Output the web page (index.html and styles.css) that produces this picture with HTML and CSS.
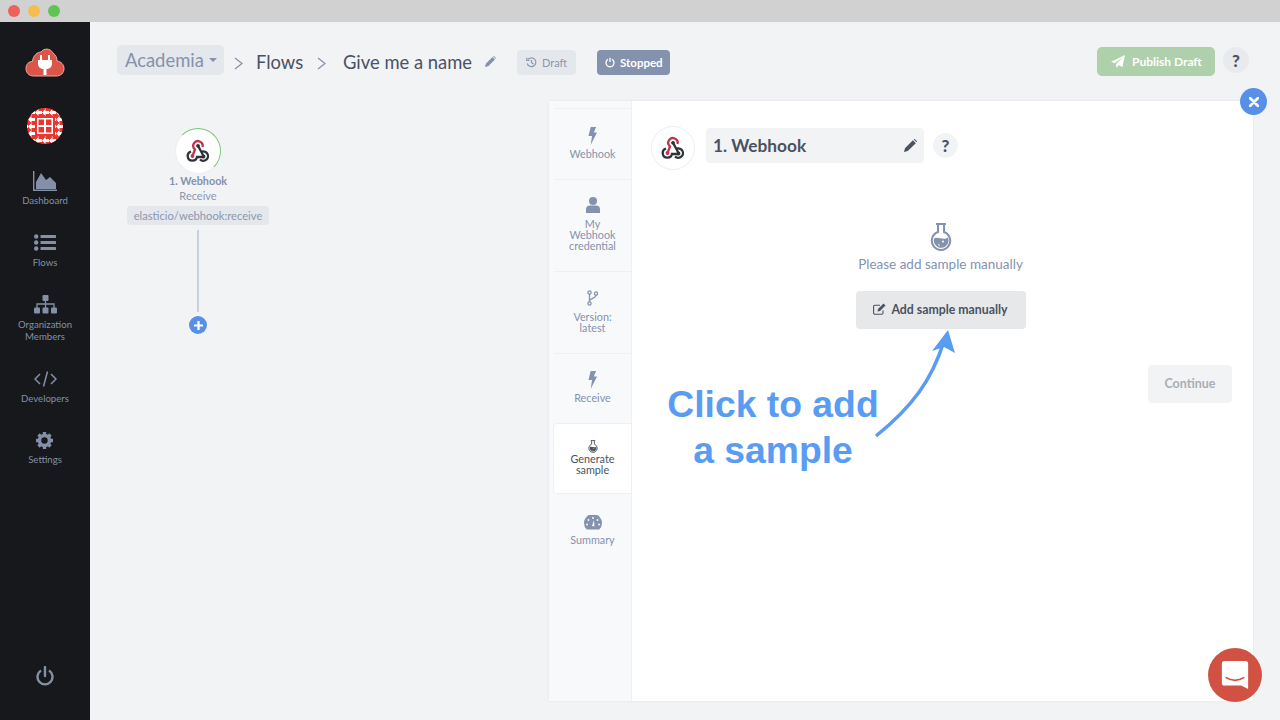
FILE: index.html
```html
<!DOCTYPE html>
<html lang="en">
<head>
    <meta charset="UTF-8">
    <title>Flows</title>
    <link rel="stylesheet" href="styles.css">
</head>
<body>
    <svg class="defs" width="0" height="0">
        <symbol id="webhook" viewBox="0 0 24 24">
            <path d="M6.500 17 L9 10.500 A4.700 4.700 0 1 1 16.500 8" fill="none" stroke="#c2334f" stroke-width="2.300"/>
            <circle cx="6.500" cy="17" r="1.900" fill="#c2334f"/>
            <path d="M12 6.800 L17.500 17" fill="none" stroke="#2f3238" stroke-width="2.300"/>
            <path d="M5 12.500 A4.700 4.700 0 1 0 11 18 H17.500" fill="none" stroke="#2f3238" stroke-width="2.300"/>
            <path d="M15 13 A4.700 4.700 0 1 1 14 20.500" fill="none" stroke="#2f3238" stroke-width="2.300"/>
            <circle cx="12" cy="6.800" r="1.900" fill="#2f3238"/>
            <circle cx="17.500" cy="17.500" r="1.900" fill="#2f3238"/>
        </symbol>
        <symbol id="bolt" viewBox="0 0 12 20">
            <path d="M4 0 L10 0 L7.500 6 L11 6 L4 20 L5.500 10 L1.500 10 Z" fill="currentColor"/>
        </symbol>
        <symbol id="flask" viewBox="0 0 22 28">
            <path d="M6 1 H16 M8 1 V9 A9.200 9.200 0 1 0 14 9 V1" fill="none" stroke="currentColor" stroke-width="2"/>
            <path d="M4 15.500 C8 13 13 18 18 14.500 A7.400 7.400 0 1 1 4 15.500 Z" fill="currentColor"/>
            <circle cx="13" cy="18.500" r="1" fill="#fff"/>
            <circle cx="9" cy="22" r=".8" fill="#fff"/>
        </symbol>
    </svg>

    <div class="titlebar">
        <span class="light light-red"></span>
        <span class="light light-yellow"></span>
        <span class="light light-green"></span>
    </div>

    <div class="app">
        <nav class="sidebar">
            <svg class="logo" width="40" height="30" viewBox="0 0 40 30">
                <path d="M9 29 C3 29 1 25 1 21.500 C1 17 4 14.500 7.500 14.500 C8 8 13 5 16 5 C19 1 25 1 28 6 C31 8 32 11 32 14 C36 14.500 39 17.500 39 21.500 C39 26 36 29 31 29 Z" fill="#db5549" stroke="#f2a79f" stroke-width="1"/>
                <path d="M16 8 V13 M24 8 V13" stroke="#fff" stroke-width="2" fill="none"/>
                <path d="M13 13 H27 V17 C27 20 24 22 21.500 22 V28 H18.500 V22 C16 22 13 20 13 17 Z" fill="#fff"/>
            </svg>
            <svg class="avatar" width="36" height="36" viewBox="0 0 36 36">
                <defs>
                    <pattern id="tiles" width="7" height="7" patternUnits="userSpaceOnUse" patternTransform="translate(1 1)">
                        <path d="M0 3.500 L3.500 0 L3.500 2 L7 2 L7 5 L3.500 5 L3.500 7 Z" fill="#fff"/>
                    </pattern>
                    <clipPath id="round"><circle cx="18" cy="18" r="18"/></clipPath>
                </defs>
                <g clip-path="url(#round)">
                    <rect width="36" height="36" fill="#e8372f"/>
                    <rect width="36" height="36" fill="url(#tiles)"/>
                    <rect x="8" y="8" width="20" height="20" fill="#e8372f"/>
                    <rect x="10" y="10" width="16" height="16" fill="#fff"/>
                    <rect x="11.500" y="11.500" width="5.500" height="5.500" fill="#e8372f"/>
                    <rect x="19" y="11.500" width="5.500" height="5.500" fill="#e8372f"/>
                    <rect x="11.500" y="19" width="5.500" height="5.500" fill="#e8372f"/>
                    <rect x="19" y="19" width="5.500" height="5.500" fill="#e8372f"/>
                </g>
            </svg>
            <a class="side-item side-dashboard">
                <svg width="24" height="20" viewBox="0 0 24 20">
                    <path d="M.7 0 V19.300 H24" fill="none" stroke="currentColor" stroke-width="1.400"/>
                    <path d="M3 18 V11 L8 2 L13 9 L17 6 L23 12 V18 Z" fill="currentColor"/>
                </svg>
                <span>Dashboard</span>
            </a>
            <a class="side-item side-flows">
                <svg width="22" height="17" viewBox="0 0 22 17">
                    <g fill="currentColor">
                        <circle cx="2.200" cy="2.500" r="2.200"/><circle cx="2.200" cy="8.500" r="2.200"/><circle cx="2.200" cy="14.500" r="2.200"/>
                        <rect x="6.500" y="1" width="15.500" height="3" rx=".5"/><rect x="6.500" y="7" width="15.500" height="3" rx=".5"/><rect x="6.500" y="13" width="15.500" height="3" rx=".5"/>
                    </g>
                </svg>
                <span>Flows</span>
            </a>
            <a class="side-item side-org">
                <svg width="23" height="19" viewBox="0 0 23 19">
                    <g fill="currentColor">
                        <rect x="8.500" y="0" width="6" height="6" rx="1"/>
                        <rect x="0" y="12.500" width="6" height="6" rx="1"/><rect x="8.500" y="12.500" width="6" height="6" rx="1"/><rect x="17" y="12.500" width="6" height="6" rx="1"/>
                    </g>
                    <path d="M3 13 V9 H20 V13 M11.500 5 V13" fill="none" stroke="currentColor" stroke-width="1.300"/>
                </svg>
                <span>Organization<br>Members</span>
            </a>
            <a class="side-item side-dev">
                <svg width="23" height="16" viewBox="0 0 23 16">
                    <path d="M6 3 L1 8 L6 13 M17 3 L22 8 L17 13 M13.500 .5 L9.500 15.500" fill="none" stroke="currentColor" stroke-width="1.500"/>
                </svg>
                <span>Developers</span>
            </a>
            <a class="side-item side-settings">
                <svg width="19" height="19" viewBox="0 0 19 19">
                    <circle cx="9.500" cy="9.500" r="5" fill="none" stroke="currentColor" stroke-width="3.600"/>
                    <path d="M9.500 1 V18 M1 9.500 H18 M3.500 3.500 L15.500 15.500 M15.500 3.500 L3.500 15.500" stroke="currentColor" stroke-width="3.400" stroke-dasharray="3 11"/>
                </svg>
                <span>Settings</span>
            </a>
            <svg class="power" width="18" height="20" viewBox="0 0 18 20">
                <path d="M5 4.500 A7.500 7.500 0 1 0 13 4.500" fill="none" stroke="currentColor" stroke-width="2.400"/>
                <path d="M9 1 V10" stroke="currentColor" stroke-width="2.400" stroke-linecap="round"/>
            </svg>
        </nav>

        <main class="main">
            <header class="topbar">
                <div class="org-pick">Academia <span class="caret"></span></div>
                <svg class="crumb-arrow" width="9" height="13" viewBox="0 0 9 13"><path d="M1 1 L8 6.500 L1 12" fill="none" stroke="currentColor" stroke-width="1.300"/></svg>
                <span class="crumb crumb-flows">Flows</span>
                <svg class="crumb-arrow" width="9" height="13" viewBox="0 0 9 13"><path d="M1 1 L8 6.500 L1 12" fill="none" stroke="currentColor" stroke-width="1.300"/></svg>
                <span class="crumb crumb-name">Give me a name</span>
                <svg class="crumb-pencil" width="11" height="11" viewBox="0 0 11 11"><path d="M0 11 L.8 7.800 L7.500 1 L10 3.500 L3.200 10.200 Z M8.200 .4 L9 0 L11 2 L10.600 2.800 Z" fill="currentColor"/></svg>
                <span class="tag tag-draft">
                    <svg width="11" height="11" viewBox="0 0 11 11"><path d="M2 2.500 A4.400 4.400 0 1 1 1.200 6.500 M5.500 3 V5.700 L7.500 7 M.8 .8 V3.500 H3.500" fill="none" stroke="currentColor" stroke-width="1.200"/></svg>
                    Draft
                </span>
                <span class="tag tag-stopped">
                    <svg width="10" height="11" viewBox="0 0 10 11"><path d="M3 2.300 A4 4 0 1 0 7 2.300 M5 .8 V5" fill="none" stroke="currentColor" stroke-width="1.300"/></svg>
                    Stopped
                </span>
                <button class="publish">
                    <svg width="14" height="13" viewBox="0 0 14 13"><path d="M14 0 L11.500 12 L7.500 10.300 L5.500 13 L5 9.300 L12 2 L3.800 8.300 L0 6.800 Z" fill="currentColor"/></svg>
                    Publish Draft
                </button>
                <span class="help help-top">?</span>
            </header>

            <div class="workspace">
                <section class="canvas">
                    <div class="node">
                        <div class="node-circle"><svg width="24" height="24"><use href="#webhook"/></svg></div>
                        <div class="node-title">1. Webhook</div>
                        <div class="node-sub">Receive</div>
                        <div class="node-tag">elasticio/webhook:receive</div>
                        <div class="node-line"></div>
                        <div class="node-add">
                            <svg width="9" height="9" viewBox="0 0 9 9"><path d="M4.500 0 V9 M0 4.500 H9" stroke="#fff" stroke-width="2.200"/></svg>
                        </div>
                    </div>
                </section>

                <section class="panel">
                    <span class="panel-close">
                        <svg width="10" height="10" viewBox="0 0 10 10"><path d="M1 1 L9 9 M9 1 L1 9" stroke="#fff" stroke-width="2.600" stroke-linecap="round"/></svg>
                    </span>
                    <div class="tabs">
                        <a class="tab tab-webhook">
                            <svg width="11" height="18"><use href="#bolt"/></svg>
                            <span>Webhook</span>
                        </a>
                        <a class="tab tab-cred">
                            <svg width="14" height="16" viewBox="0 0 14 16"><circle cx="7" cy="4" r="4" fill="currentColor"/><path d="M0 16 V12 C0 9.500 2 8.500 4 8.500 H10 C12 8.500 14 9.500 14 12 V16 Z" fill="currentColor"/></svg>
                            <span>My<br>Webhook<br>credential</span>
                        </a>
                        <a class="tab tab-version">
                            <svg width="11" height="16" viewBox="0 0 11 16"><g fill="none" stroke="currentColor" stroke-width="1.300"><circle cx="2.500" cy="2.500" r="1.600"/><circle cx="2.500" cy="13.500" r="1.600"/><circle cx="9" cy="3.500" r="1.600"/><path d="M2.500 4 V12 M9 5 C9 8.500 3 8 2.500 11"/></g></svg>
                            <span>Version:<br>latest</span>
                        </a>
                        <a class="tab tab-receive">
                            <svg width="11" height="18"><use href="#bolt"/></svg>
                            <span>Receive</span>
                        </a>
                        <a class="tab tab-sample">
                            <svg width="10" height="13"><use href="#flask"/></svg>
                            <span>Generate<br>sample</span>
                        </a>
                        <a class="tab tab-summary">
                            <svg width="18" height="15" viewBox="0 0 18 15"><path d="M2.800 14.500 A9 9 0 1 1 15.200 14.500 Z" fill="currentColor"/><g fill="#f8f9fb"><circle cx="9" cy="3" r="1"/><circle cx="4.500" cy="5" r="1"/><circle cx="13.500" cy="5" r="1"/><circle cx="3" cy="9.500" r="1"/><circle cx="15" cy="9.500" r="1"/><path d="M8 11 L10 5 L10.500 11.500 Z"/></g></svg>
                            <span>Summary</span>
                        </a>
                    </div>

                    <div class="panel-body">
                        <div class="step-head">
                            <div class="step-circle"><svg width="24" height="24"><use href="#webhook"/></svg></div>
                            <div class="step-name">
                                <span>1. Webhook</span>
                                <svg width="13" height="13" viewBox="0 0 11 11"><path d="M0 11 L.8 7.800 L7.500 1 L10 3.500 L3.200 10.200 Z M8.200 .4 L9 0 L11 2 L10.600 2.800 Z" fill="currentColor"/></svg>
                            </div>
                            <span class="help help-step">?</span>
                        </div>
                        <div class="sample-box">
                            <svg class="sample-flask" width="22" height="28"><use href="#flask"/></svg>
                            <p class="sample-text">Please add sample manually</p>
                            <button class="sample-btn">
                                <svg width="13" height="12" viewBox="0 0 13 12"><path d="M10 7.500 V10 A1.200 1.200 0 0 1 8.800 11.200 H1.800 A1.200 1.200 0 0 1 .6 10 V3.500 A1.200 1.200 0 0 1 1.800 2.300 H7" fill="none" stroke="currentColor" stroke-width="1.100"/><path d="M4.500 8.500 L5 6 L10.500 .6 L12.500 2.500 L7 8 Z" fill="currentColor"/></svg>
                                Add sample manually
                            </button>
                        </div>
                        <div class="continue-row"><button class="continue">Continue</button></div>
                    </div>

                    <div class="note">Click to add<br>a sample</div>
                    <svg class="note-arrow" width="90" height="115" viewBox="0 0 90 115">
                        <path d="M4 111 C40 82 60 55 72 16" fill="none" stroke="#5a9cf2" stroke-width="3.500"/>
                        <path d="M76 5 L83 28 L72 22 L60 26 Z" fill="#5a9cf2"/>
                    </svg>
                </section>
            </div>
        </main>
    </div>

    <div class="chat">
        <svg width="28" height="28" viewBox="0 0 32 32">
            <path d="M4 0 H28 A3 3 0 0 1 31 3 V32 L23 28 H4 A3 3 0 0 1 1 25 V3 A3 3 0 0 1 4 0 Z" fill="#fff"/>
            <path d="M6 19 C12 23 20 23 26 19" fill="none" stroke="#d15243" stroke-width="2" stroke-linecap="round"/>
        </svg>
    </div>
</body>
</html>
```

FILE: styles.css
```css
* {
    box-sizing: border-box;
}
html, body {
    margin: 0;
    height: 720px;
    overflow: hidden;
}
body {
    background-color: #f2f3f5;
    font-family: Lato, "Open Sans", sans-serif;
    color: #4a5263;
    position: relative;
}
.defs {
    position: absolute;
}
button {
    font-family: inherit;
    border: none;
}
p {
    margin: 0;
}

/* window chrome */
.titlebar {
    height: 22px;
    background-color: #d1d1d1;
    display: flex;
    align-items: center;
    gap: 8px;
    padding-left: 8px;
}
.light {
    width: 12px;
    height: 12px;
    border-radius: 50%;
}
.light-red { background-color: #ed6258; }
.light-yellow { background-color: #f5bd4f; }
.light-green { background-color: #5ec452; }

.app {
    display: flex;
    height: 698px;
}

/* sidebar */
.sidebar {
    width: 90px;
    flex-shrink: 0;
    background-color: #16181b;
    color: #8390a8;
    display: flex;
    flex-direction: column;
    align-items: center;
}
.logo {
    margin-top: 25px;
}
.avatar {
    margin-top: 31px;
}
.side-item {
    display: flex;
    flex-direction: column;
    align-items: center;
    font-size: 9.600px;
    line-height: 12px;
    text-align: center;
}
.side-dashboard { margin-top: 27px; gap: 4px; }
.side-flows { margin-top: 27px; gap: 6px; }
.side-org { margin-top: 26px; gap: 5px; }
.side-dev { margin-top: 28px; gap: 6px; }
.side-settings { margin-top: 26px; gap: 4px; }
.power {
    margin-top: auto;
    margin-bottom: 34px;
}

/* top bar */
.main {
    flex: 1;
    display: flex;
    flex-direction: column;
}
.topbar {
    height: 79px;
    display: flex;
    align-items: center;
    padding: 0 31px 0 27px;
    flex-shrink: 0;
}
.org-pick {
    height: 30px;
    width: 107px;
    background-color: #e4e7ec;
    border-radius: 5px;
    color: #8492ad;
    font-size: 18.400px;
    padding-left: 8px;
    line-height: 26px;
    display: flex;
    align-items: center;
    gap: 5px;
    margin-top: -4px;
    white-space: nowrap;
}
.caret {
    border: 4px solid transparent;
    border-top: 4px solid #8492ad;
    margin-top: 4px;
}
.crumb-arrow {
    color: #8492ad;
    margin-top: 3px;
}
.org-pick + .crumb-arrow {
    margin-left: 10px;
}
.crumb {
    font-size: 18.400px;
    color: #4a5263;
}
.crumb-flows {
    width: 46px;
    margin: 0 15px 0 13px;
    white-space: nowrap;
}
.crumb-name {
    width: 130px;
    margin-left: 17px;
    white-space: nowrap;
}
.crumb-pencil {
    color: #8492ad;
    margin-left: 12px;
}
.tag {
    height: 25px;
    border-radius: 4px;
    font-size: 11px;
    display: flex;
    align-items: center;
    gap: 5px;
    margin-top: 2px;
}
.tag-draft {
    width: 59px;
    margin-left: 21px;
    padding-left: 9px;
    background-color: #e4e7ec;
    color: #8c98b0;
}
.tag-stopped {
    width: 73px;
    margin-left: 21px;
    padding-left: 8px;
    background-color: #8492ad;
    color: #fff;
    font-size: 11.500px;
    font-weight: 700;
}
.publish {
    margin-left: auto;
    width: 118px;
    height: 29px;
    padding-bottom: 2px;
    background-color: #aed0aa;
    color: #fff;
    border-radius: 5px;
    font-size: 12px;
    font-weight: 700;
    display: flex;
    align-items: center;
    gap: 7px;
    padding-left: 14px;
}
.help {
    display: flex;
    align-items: center;
    justify-content: center;
    width: 26px;
    height: 26px;
    border-radius: 50%;
    background-color: #e9eaee;
    color: #4a5263;
    font-weight: 900;
    font-size: 17px;
}
.help-top {
    margin-left: 8px;
    margin-top: -3px;
}

/* flow canvas */
.workspace {
    flex: 1;
    display: flex;
    align-items: flex-start;
}
.canvas {
    width: 459px;
    flex-shrink: 0;
    padding: 27px 0 0 37px;
}
.node {
    width: 142px;
    display: flex;
    flex-direction: column;
    align-items: center;
    text-align: center;
}
.node-circle {
    width: 46px;
    height: 46px;
    border-radius: 50%;
    background-color: #fff;
    border: 1px solid #eceef1;
    border-top-color: #7bc77a;
    border-right-color: #7bc77a;
    display: flex;
    align-items: center;
    justify-content: center;
}
.node-title {
    font-size: 10.800px;
    font-weight: 700;
    color: #8492ad;
    line-height: 14px;
}
.node-sub {
    font-size: 11px;
    color: #8c98b0;
    line-height: 15px;
}
.node-tag {
    margin-top: 3px;
    height: 19px;
    width: 142px;
    line-height: 19px;
    background-color: #e4e7ec;
    border-radius: 4px;
    font-size: 11.200px;
    color: #8c98b0;
    white-space: nowrap;
}
.node-line {
    width: 2px;
    height: 82px;
    margin-top: 5px;
    background-color: #c8d0df;
}
.node-add {
    width: 18px;
    height: 18px;
    margin-top: 4px;
    border-radius: 50%;
    background-color: #5890e8;
    display: flex;
    align-items: center;
    justify-content: center;
}

/* step panel */
.panel {
    position: relative;
    width: 704px;
    height: 600px;
    background-color: #fff;
    box-shadow: 0 0 3px rgba(60, 70, 90, .08);
    display: flex;
    border-radius: 2px;
}
.panel-close {
    position: absolute;
    top: -13px;
    right: -14px;
    width: 27px;
    height: 27px;
    border-radius: 50%;
    background-color: #5890e8;
    display: flex;
    align-items: center;
    justify-content: center;
    z-index: 2;
}
.tabs {
    width: 83px;
    flex-shrink: 0;
    background-color: #f8f9fb;
    border-right: 1px solid #eef0f3;
    padding: 7px 0 0 5px;
    display: flex;
    flex-direction: column;
}
.tab {
    display: flex;
    flex-direction: column;
    align-items: center;
    font-size: 10.800px;
    line-height: 11px;
    color: #8492ad;
    text-align: center;
    border-top: 1px solid #eef0f3;
}
.tab-webhook { height: 71px; padding-top: 18px; gap: 3px; }
.tab-cred { height: 92px; padding-top: 17px; gap: 5px; }
.tab-version { height: 82px; padding-top: 18px; gap: 5px; }
.tab-receive { height: 70px; padding-top: 17px; gap: 3px; }
.tab-sample {
    height: 71px;
    margin-left: -1px;
    padding-top: 16px;
    gap: 0;
    background-color: #fff;
    border: 1px solid #eef0f3;
    border-right: none;
    border-radius: 4px 0 0 4px;
    color: #4a5263;
}
.tab-summary { padding-top: 21px; gap: 4px; border-top: none; }

.panel-body {
    flex: 1;
    display: flex;
    flex-direction: column;
    padding: 25px 21px 0 19px;
}
.step-head {
    display: flex;
    align-items: center;
}
.step-circle {
    width: 44px;
    height: 44px;
    border-radius: 50%;
    border: 1px solid #eceef1;
    display: flex;
    align-items: center;
    justify-content: center;
}
.step-name {
    width: 218px;
    height: 35px;
    margin: -6px 0 0 11px;
    padding: 0 7px 0 7px;
    background-color: #f2f3f5;
    border-radius: 4px;
    display: flex;
    align-items: center;
    justify-content: space-between;
    font-size: 17.300px;
    font-weight: 700;
    color: #4a5263;
}
.help-step {
    width: 25px;
    height: 25px;
    margin: -6px 0 0 9px;
    background-color: #f2f3f5;
}
.sample-box {
    display: flex;
    flex-direction: column;
    align-items: center;
    margin-top: 53px;
    margin-left: -2px;
    color: #8492ad;
}
.sample-text {
    font-size: 13.500px;
    line-height: 16px;
    margin-top: 5px;
}
.sample-btn {
    width: 170px;
    height: 38px;
    margin-top: 19px;
    padding-bottom: 3px;
    background-color: #e7e8ea;
    border-radius: 4px;
    color: #4a5263;
    font-size: 12.300px;
    font-weight: 700;
    display: flex;
    align-items: center;
    justify-content: center;
    gap: 5px;
}
.continue-row {
    display: flex;
    justify-content: flex-end;
    margin-top: 36px;
}
.continue {
    width: 84px;
    height: 38px;
    padding-bottom: 3px;
    background-color: #f2f3f5;
    border-radius: 4px;
    color: #a9adb5;
    font-size: 12.500px;
    font-weight: 700;
}

/* annotation on top of the screenshot */
.note {
    position: absolute;
    left: 104px;
    top: 280px;
    width: 240px;
    text-align: center;
    font-family: "Liberation Sans", Arial, sans-serif;
    font-weight: 700;
    font-size: 37.300px;
    line-height: 46px;
    color: #5a9cf2;
}
.note-arrow {
    position: absolute;
    left: 323px;
    top: 224px;
}
.chat {
    position: absolute;
    left: 1208px;
    top: 648px;
    width: 54px;
    height: 54px;
    border-radius: 50%;
    background-color: #d15243;
    display: flex;
    align-items: center;
    justify-content: center;
}
```
